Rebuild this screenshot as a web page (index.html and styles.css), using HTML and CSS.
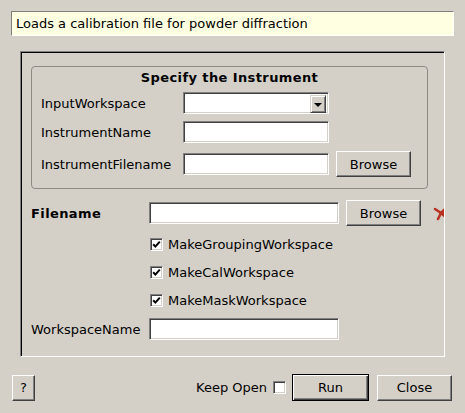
FILE: index.html
```html
<!DOCTYPE html>
<html>
<head>
<meta charset="utf-8">
<link rel="stylesheet" href="styles.css">
</head>
<body>
<div class="desc">Loads a calibration file for powder diffraction</div>
<div class="frame">
  <div class="content">
    <div class="group">
      <div class="group-title">Specify the Instrument</div>
      <div class="grow g1">
        <span class="glbl">InputWorkspace</span>
        <div class="combo"><span class="combo-btn"><span class="tri"></span></span></div>
      </div>
      <div class="grow g2">
        <span class="glbl">InstrumentName</span>
        <div class="input gin"></div>
      </div>
      <div class="grow g3">
        <span class="glbl">InstrumentFilename</span>
        <div class="input gin"></div>
        <button class="btn browse">Browse</button>
      </div>
    </div>
    <div class="frow fname">
      <span class="flbl bold">Filename</span>
      <div class="input fin"></div>
      <button class="btn browse2">Browse</button>
      <svg class="star" width="18" height="16" viewBox="0 0 18 16">
        <g stroke="#b8321f" stroke-width="2.6" stroke-linecap="round">
          <line x1="8" y1="8" x2="15" y2="1"/>
          <line x1="8" y1="8" x2="2" y2="4"/>
          <line x1="8" y1="8" x2="5" y2="14"/>
          <line x1="8" y1="8" x2="14" y2="13"/>
          <line x1="8" y1="8" x2="16" y2="8"/>
        </g>
      </svg>
    </div>
    <div class="crow c1"><span class="cb"><svg width="9" height="9" viewBox="0 0 9 9"><path d="M1.2 4.2 L3.4 6.6 L7.8 1.6" fill="none" stroke="#000" stroke-width="2"/></svg></span><span>MakeGroupingWorkspace</span></div>
    <div class="crow"><span class="cb"><svg width="9" height="9" viewBox="0 0 9 9"><path d="M1.2 4.2 L3.4 6.6 L7.8 1.6" fill="none" stroke="#000" stroke-width="2"/></svg></span><span>MakeCalWorkspace</span></div>
    <div class="crow"><span class="cb"><svg width="9" height="9" viewBox="0 0 9 9"><path d="M1.2 4.2 L3.4 6.6 L7.8 1.6" fill="none" stroke="#000" stroke-width="2"/></svg></span><span>MakeMaskWorkspace</span></div>
    <div class="frow wsrow">
      <span class="flbl">WorkspaceName</span>
      <div class="input fin"></div>
    </div>
  </div>
</div>
<div class="footer">
  <button class="btn help">?</button>
  <div class="spacer"></div>
  <span class="keep">Keep Open</span>
  <span class="cb keepcb"></span>
  <button class="btn run">Run</button>
  <button class="btn close">Close</button>
</div>
</body>
</html>
```
FILE: styles.css
```css
* { box-sizing: border-box; }
html, body {
  margin: 0;
  padding: 0;
}
body {
  width: 465px;
  height: 413px;
  overflow: hidden;
  background: #d4d0c8;
  font-family: "DejaVu Sans", sans-serif;
  font-size: 13px;
  color: #000;
}
.desc {
  margin: 11px 11px 0 11px;
  width: 443px;
  height: 25px;
  background: #ffffe1;
  border: 1px solid;
  border-color: #808080 #ffffff #ffffff #808080;
  padding-left: 4px;
  line-height: 23px;
  white-space: nowrap;
}
.frame {
  margin: 15px 0 0 20px;
  width: 425px;
  height: 306px;
  border: 1px solid;
  border-color: #808080 #ffffff #ffffff #808080;
  box-shadow: inset 1px 1px 0 #000, inset -1px -1px 0 #d4d0c8;
}
.content {
  width: 100%;
  height: 100%;
  padding: 14px 0 0 10px;
  overflow: hidden;
}
.group {
  width: 397px;
  height: 123px;
  border: 1px solid #8e8a84;
  border-radius: 4px;
  padding: 3px 0 0 9px;
}
.group-title {
  height: 16px;
  line-height: 16px;
  font-weight: bold;
  text-align: center;
  padding-right: 9px;
  letter-spacing: 0.4px;
}
.grow {
  display: flex;
  align-items: center;
}
.g1 { height: 22px; margin-top: 6px; }
.g2 { height: 22px; margin-top: 7px; }
.g3 { height: 26px; margin-top: 8px; }
.glbl {
  width: 142px;
  flex: none;
  white-space: nowrap;
}
.input {
  flex: none;
  height: 22px;
  background: #fff;
  border: 1px solid;
  border-color: #808080 #ffffff #ffffff #808080;
  box-shadow: inset 1px 1px 0 #404040, inset -1px -1px 0 #d4d0c8;
}
.gin { width: 146px; }
.combo {
  flex: none;
  width: 146px;
  height: 22px;
  background: #fff;
  border: 1px solid;
  border-color: #808080 #ffffff #ffffff #808080;
  box-shadow: inset 1px 1px 0 #404040, inset -1px -1px 0 #d4d0c8;
  display: flex;
  justify-content: flex-end;
  padding: 2px;
}
.combo-btn {
  width: 16px;
  height: 18px;
  background: #d4d0c8;
  border: 1px solid;
  border-color: #d4d0c8 #404040 #404040 #d4d0c8;
  box-shadow: inset 1px 1px 0 #fff, inset -1px -1px 0 #808080;
  display: flex;
  align-items: center;
  justify-content: center;
}
.tri {
  width: 0;
  height: 0;
  border-left: 4px solid transparent;
  border-right: 4px solid transparent;
  border-top: 4px solid #000;
  margin-top: 1px;
}
.btn {
  flex: none;
  font-family: "DejaVu Sans", sans-serif;
  font-size: 13px;
  color: #000;
  background: #d4d0c8;
  border: 1px solid;
  border-color: #ffffff #404040 #404040 #ffffff;
  box-shadow: inset -1px -1px 0 #808080;
  padding: 0;
  height: 26px;
  margin: 0;
}
.browse { width: 75px; margin-left: 7px; }
.browse2 { width: 75px; margin-left: 7px; }
.frow {
  display: flex;
  align-items: center;
}
.fname { height: 26px; margin-top: 11px; }
.flbl { width: 118px; flex: none; white-space: nowrap; }
.bold { font-weight: bold; letter-spacing: 0.4px; }
.fin { width: 190px; }
.star { margin-left: 12px; flex: none; }
.crow {
  height: 28px;
  display: flex;
  align-items: center;
  padding-left: 119px;
}
.c1 { margin-top: 4px; }
.cb {
  width: 13px;
  height: 13px;
  flex: none;
  background: #fff;
  border: 1px solid;
  border-color: #808080 #ffffff #ffffff #808080;
  box-shadow: inset 1px 1px 0 #404040, inset -1px -1px 0 #d4d0c8;
  display: inline-flex;
  align-items: center;
  justify-content: center;
  margin-right: 5px;
}
.wsrow { height: 22px; margin-top: 4px; }
.footer {
  display: flex;
  align-items: center;
  margin: 17px 13px 0 12px;
  height: 27px;
}
.help { width: 23px; height: 26px; }
.spacer { flex: 1; }
.keep { margin-right: 6px; white-space: nowrap; }
.keepcb { margin-right: 6px; }
.run {
  width: 77px;
  height: 27px;
  border: 1px solid #000;
  box-shadow: inset 1px 1px 0 #fff, inset -1px -1px 0 #404040, inset -2px -2px 0 #808080;
}
.close { width: 75px; margin-left: 8px; }
```
